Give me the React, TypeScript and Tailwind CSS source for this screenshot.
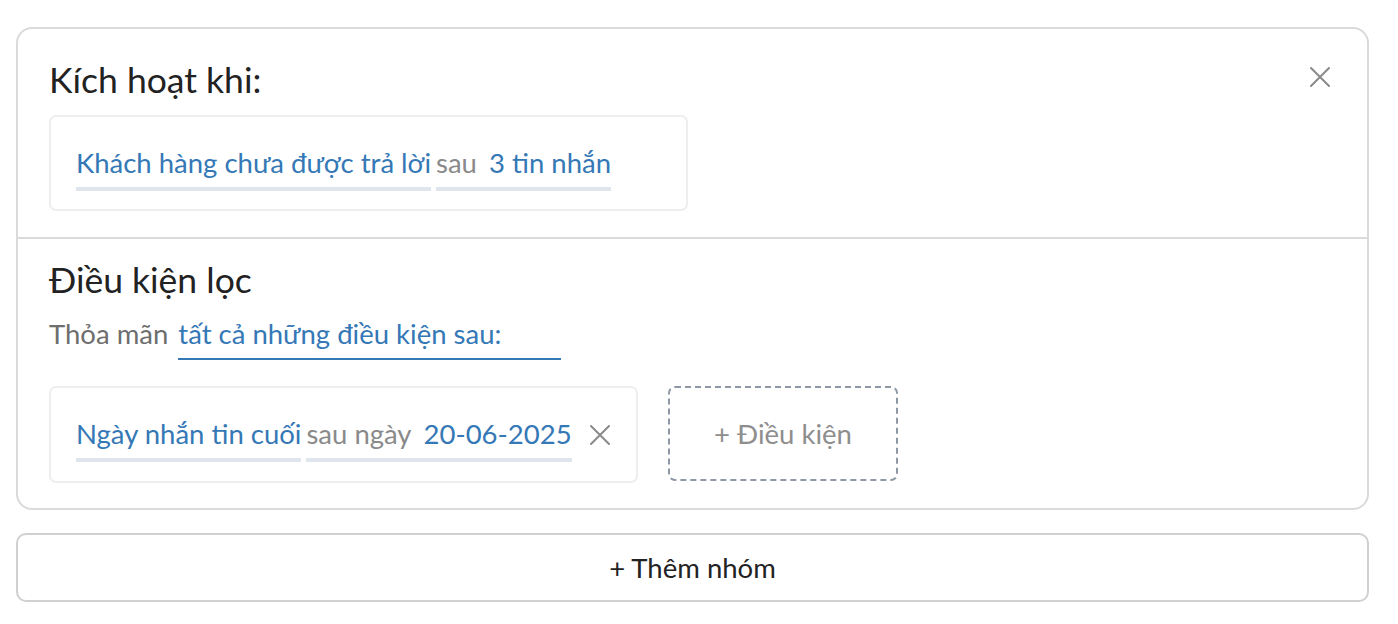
const font = { fontFamily: 'Lato, "Noto Sans", sans-serif' };

const CloseIcon = ({ className }: { className?: string }) => (
    <svg className={className} width="20" height="20" viewBox="0 0 20 20" fill="none" stroke="currentColor" strokeWidth="2" strokeLinecap="round">
        <path d="M1 1L19 19M19 1L1 19" />
    </svg>
);

const App = () => {
    return (
        <div className="w-[1398px] h-[624px] bg-white pt-[27px] pl-[16px]" style={font}>
            {/* group card */}
            <div className="w-[1353px] border-2 border-[#dadada] rounded-[16px]">
                {/* trigger */}
                <div className="relative px-[31px] pt-[29px] pb-[26px] border-b-2 border-[#dadada]">
                    <div className="text-[35.5px] leading-[44px] text-[#222]">Kích hoạt khi:</div>
                    <button className="absolute right-[37px] top-[38px] text-[#8a8a8a]">
                        <CloseIcon />
                    </button>
                    <div className="mt-[13px] h-[96px] w-[639px] border-2 border-[#eeeeee] rounded-[7px] pl-[25px] pt-[28px]">
                        <div className="flex items-end gap-[5px] text-[27.5px] leading-[36px] whitespace-nowrap">
                            <span className="text-[#3578b6] border-b-[4px] border-[#dfe5ec] pb-[6px]">Khách hàng chưa được trả lời</span>
                            <span className="border-b-[4px] border-[#dfe5ec] pb-[6px]">
                                <span className="text-[#8a8a8a]">sau</span>
                                <span className="text-[#3578b6] ml-[12px]">3 tin nhắn</span>
                            </span>
                        </div>
                    </div>
                </div>

                {/* filters */}
                <div className="px-[31px] pt-[19px] pb-[25px]">
                    <div className="text-[35.5px] leading-[44px] text-[#222]">Điều kiện lọc</div>
                    <div className="mt-[14px] flex text-[27.5px] leading-[36px] whitespace-nowrap">
                        <span className="text-[#6e6e6e]">Thỏa mãn</span>
                        <span className="ml-[10px] w-[383px] text-[#3578b6] border-b-2 border-[#3578b6] pb-[6px]">tất cả những điều kiện sau:</span>
                    </div>
                    <div className="mt-[26px] flex items-start gap-[30px]">
                        <div className="flex items-start h-[97px] w-[589px] shrink-0 border-2 border-[#eeeeee] rounded-[7px] pl-[25px] pt-[28px]">
                            <div className="flex items-end gap-[5px] text-[27.5px] leading-[36px] whitespace-nowrap shrink-0">
                                <span className="text-[#3578b6] border-b-[4px] border-[#dfe5ec] pb-[6px]">Ngày nhắn tin cuối</span>
                                <span className="border-b-[4px] border-[#dfe5ec] pb-[6px]">
                                    <span className="text-[#8a8a8a]">sau ngày</span>
                                    <span className="text-[#3578b6] ml-[12px]">20-06-2025</span>
                                </span>
                            </div>
                            <CloseIcon className="ml-[18px] mt-[9px] text-[#8a8a8a] shrink-0" />
                        </div>
                        <button className="h-[95px] w-[230px] shrink-0 border-2 border-dashed border-[#8e97a4] rounded-[7px] text-[27.5px] text-[#8e8e8e]">
                            + Điều kiện
                        </button>
                    </div>
                </div>
            </div>

            <button className="mt-[23px] w-[1353px] h-[69px] border-2 border-[#d0d0d0] rounded-[10px] text-[27.5px] text-[#222]">
                + Thêm nhóm
            </button>
        </div>
    );
};

export default App;
